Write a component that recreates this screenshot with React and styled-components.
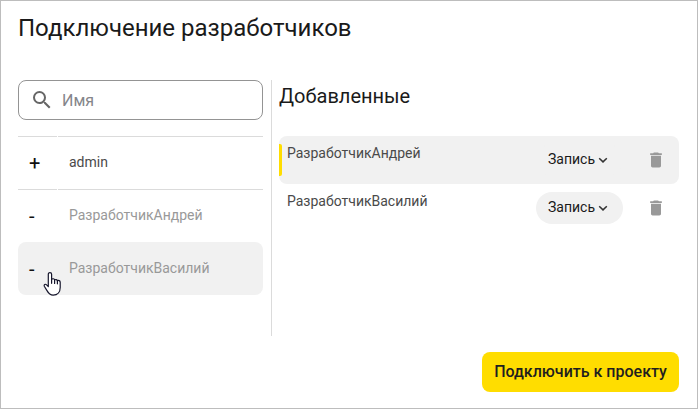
import React from "react";
import styled, { createGlobalStyle } from "styled-components";

const Global = createGlobalStyle`
  * { box-sizing: border-box; }
  body { margin: 0; background: #fff; font-family: Roboto, "Noto Sans", sans-serif; }
`;

const Dialog = styled.div`
  width: 698px;
  height: 409px;
  border: 1px solid #bdbdbd;
  background: #fff;
  padding: 11px 18px 16px 17px;
  display: flex;
  flex-direction: column;
  overflow: hidden;
`;

const Title = styled.h1`
  margin: 0;
  font-size: 24px;
  line-height: 32px;
  font-weight: 400;
  color: #1a1a1a;
  white-space: nowrap;
`;

const Columns = styled.div`
  display: flex;
  height: 256px;
  margin-top: 36px;
`;

const Available = styled.section`
  width: 254px;
  padding-right: 8px;
  border-right: 1px solid #dbdbdb;
`;

const SearchField = styled.label`
  display: flex;
  align-items: center;
  height: 40px;
  padding-left: 11px;
  gap: 8px;
  border: 1px solid #949494;
  border-radius: 8px;
  color: #666;
`;

const SearchInput = styled.input`
  width: 180px;
  padding: 2px 0 0;
  border: 0;
  outline: 0;
  background: transparent;
  font: 400 16px/24px Roboto, sans-serif;
  color: #222;
  &::placeholder { color: #85858a; opacity: 1; }
`;

const UserList = styled.div`
  margin-top: 16px;
`;

const UserRow = styled.div`
  display: grid;
  grid-template-columns: 39px 1fr;
  column-gap: 1px;
  height: 53px;
  border-radius: 8px;
  background: ${(p) => (p.$hovered ? "#f1f1f1" : "transparent")};
`;

const Cell = styled.div`
  border-top: 1px solid ${(p) => (p.$line ? "#dbdbdb" : "transparent")};
  padding-left: ${(p) => p.$indent}px;
  padding-bottom: ${(p) => p.$lift || 0}px;
  display: flex;
  align-items: center;
`;

const Sign = styled.span`
  font-size: 20px;
  line-height: 20px;
  color: #111;
`;

const UserName = styled.span`
  font-size: 14px;
  line-height: 20px;
  color: ${(p) => (p.$muted ? "#999" : "#4a4a4a")};
`;

const Added = styled.section`
  width: 407px;
  padding-left: 7px;
`;

const Subtitle = styled.h2`
  margin: 0;
  height: 56px;
  font-size: 20px;
  line-height: 32px;
  font-weight: 400;
  color: #1a1a1a;
`;

const AddedRow = styled.div`
  display: grid;
  grid-template-columns: 3px 254px 87px 1fr;
  align-items: center;
  height: 48px;
  border-radius: 8px;
  background: ${(p) => (p.$active ? "#f1f1f1" : "transparent")};
`;

const Marker = styled.span`
  width: 3px;
  height: 32px;
  border-radius: 0 2px 2px 0;
  background: ${(p) => (p.$active ? "#ffdd00" : "transparent")};
`;

const AddedName = styled(UserName)`
  align-self: start;
  padding: 7px 0 0 5px;
`;

const AccessButton = styled.button`
  display: flex;
  align-items: center;
  gap: 3px;
  height: 32px;
  padding: 0 0 1px 12px;
  border: 0;
  border-radius: 16px;
  background: #f1f1f1;
  font: 400 14px/19px Roboto, sans-serif;
  color: #1a1a1a;
`;

const RemoveButton = styled.button`
  display: flex;
  justify-self: start;
  margin-left: 23px;
  padding: 0;
  border: 0;
  background: transparent;
  color: #999;
`;

const Footer = styled.footer`
  display: flex;
  justify-content: flex-end;
  margin-top: 16px;
`;

const SubmitButton = styled.button`
  width: 197px;
  height: 40px;
  padding: 0;
  border: 0;
  border-radius: 8px;
  background: #ffdd00;
  font: 500 16px/24px Roboto, sans-serif;
  color: #1f1f1f;
  white-space: nowrap;
`;

const Pointer = styled.svg`
  position: absolute;
  left: 43px;
  top: 271px;
`;

const available = [
  { sign: "+", name: "admin", line: true },
  { sign: "-", name: "РазработчикАндрей", muted: true, line: true },
  { sign: "-", name: "РазработчикВасилий", muted: true, hovered: true },
];

const added = [
  { name: "РазработчикАндрей", active: true },
  { name: "РазработчикВасилий" },
];

const SearchIcon = () => (
  <svg width="24" height="24" viewBox="0 0 24 24" fill="currentColor">
    <path d="M15.5 14h-.79l-.28-.27A6.47 6.47 0 0 0 16 9.5 6.5 6.5 0 1 0 9.5 16c1.61 0 3.09-.59 4.23-1.57l.27.28v.79l5 4.99L20.49 19l-4.99-5zm-6 0C7.01 14 5 11.99 5 9.5S7.01 5 9.5 5 14 7.01 14 9.5 11.99 14 9.5 14z" />
  </svg>
);

const Chevron = () => (
  <svg width="10" height="10" viewBox="0 0 10 10" fill="none" stroke="#333" strokeWidth="1.5">
    <path d="M1.2 3.300 5 6.900l3.8-3.6" />
  </svg>
);

const TrashIcon = () => (
  <svg width="20" height="20" viewBox="0 0 24 24" fill="currentColor">
    <path d="M6 19c0 1.1.9 2 2 2h8c1.100 0 2-.9 2-2V7H6v12zM19 4h-3.500l-1-1h-5l-1 1H5v2h14V4z" />
  </svg>
);

export default function App() {
  return (
    <>
      <Global />
      <Dialog>
        <Title>Подключение разработчиков</Title>
        <Columns>
          <Available>
            <SearchField>
              <SearchIcon />
              <SearchInput placeholder="Имя" />
            </SearchField>
            <UserList>
              {available.map((u) => (
                <UserRow key={u.name} $hovered={u.hovered}>
                  <Cell $line={u.line} $indent={11}>
                    <Sign>{u.sign}</Sign>
                  </Cell>
                  <Cell $line={u.line} $indent={11} $lift={2}>
                    <UserName $muted={u.muted}>{u.name}</UserName>
                  </Cell>
                </UserRow>
              ))}
            </UserList>
          </Available>
          <Added>
            <Subtitle>Добавленные</Subtitle>
            {added.map((u) => (
              <AddedRow key={u.name} $active={u.active}>
                <Marker $active={u.active} />
                <AddedName>{u.name}</AddedName>
                <AccessButton>
                  Запись
                  <Chevron />
                </AccessButton>
                <RemoveButton aria-label="Удалить">
                  <TrashIcon />
                </RemoveButton>
              </AddedRow>
            ))}
          </Added>
        </Columns>
        <Footer>
          <SubmitButton>Подключить к проекту</SubmitButton>
        </Footer>
      </Dialog>
      <Pointer width="20" height="26" viewBox="0 0 20 26" fill="#fff" stroke="#15152b" strokeWidth="1.2" strokeLinejoin="round" strokeLinecap="round">
        <path d="M5.300 15.500V3.200c0-2.100 3.300-2.100 3.300 0v5.300c.8-1.200 2.800-.9 3 .5.900-.9 2.600-.5 2.800.8 1-.7 2.800-.2 2.800 1.500v5.200c0 4-2.300 7.600-7.100 7.600-3.300 0-4.500-1.600-6.100-4.500L1.300 15.200c-.7-1.700 1-2.600 2.300-1.300z" />
        <path fill="none" d="M8.600 8.500v3.800M11.600 9v3.500M14.400 9.800v3" />
      </Pointer>
    </>
  );
}
